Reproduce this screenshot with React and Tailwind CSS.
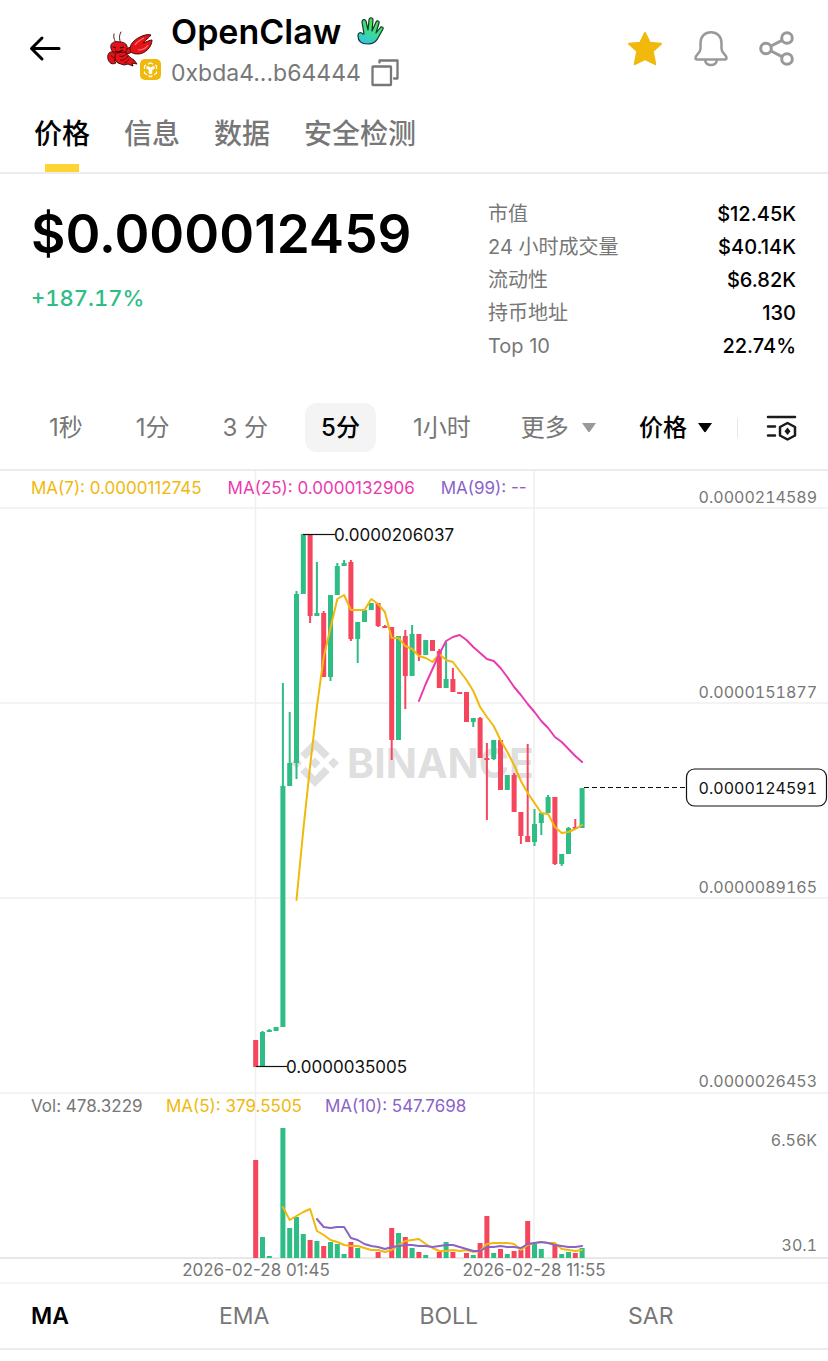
import React, { useState } from 'react';

const GREEN = '#2ebd85';
const RED = '#f6465d';
const YELLOW = '#f0b90b';
const PINK = '#e93bb0';
const PURPLE = '#8a63c9';

const STATS = [
  ['市值', '$12.45K'],
  ['24 小时成交量', '$40.14K'],
  ['流动性', '$6.82K'],
  ['持币地址', '130'],
  ['Top 10', '22.74%'],
];

const INTERVALS = ['1秒', '1分', '3 分', '5分', '1小时'];

// up/down, wick top, body top, body bottom, wick bottom, volume height
const CANDLES = [
  ['d', 1040, 1040, 1067, 1067, 98],
  ['u', 1031, 1032, 1067, 1067, 21],
  ['u', 1029, 1030, 1032, 1032, 2],
  ['u', 1027, 1027, 1031, 1031, 0],
  ['u', 683, 786, 1027, 1027, 130],
  ['u', 712, 763, 786, 786, 30],
  ['u', 591, 594, 763, 779, 41],
  ['u', 534, 534, 594, 594, 24],
  ['d', 534, 534, 616, 623, 18],
  ['u', 562, 613, 616, 616, 17],
  ['d', 611, 613, 677, 677, 12],
  ['u', 595, 595, 677, 681, 16],
  ['u', 563, 566, 595, 595, 14],
  ['u', 560, 563, 566, 566, 4],
  ['d', 560, 562, 639, 641, 16],
  ['u', 622, 622, 639, 663, 10],
  ['u', 610, 610, 622, 622, 0],
  ['u', 603, 603, 610, 610, 0],
  ['d', 603, 603, 626, 627, 6],
  ['d', 625, 626, 628, 628, 0],
  ['d', 627, 627, 740, 760, 30],
  ['u', 636, 636, 740, 740, 25],
  ['d', 630, 636, 676, 709, 21],
  ['u', 625, 634, 676, 676, 10],
  ['d', 634, 634, 655, 661, 6],
  ['u', 640, 640, 655, 655, 3],
  ['d', 640, 640, 651, 651, 0],
  ['d', 649, 651, 688, 688, 6],
  ['u', 642, 679, 688, 688, 16],
  ['d', 668, 679, 692, 692, 6],
  ['d', 692, 692, 694, 694, 0],
  ['d', 692, 692, 722, 722, 5],
  ['u', 718, 718, 722, 727, 3],
  ['d', 717, 718, 758, 758, 15],
  ['d', 743, 758, 760, 820, 42],
  ['u', 740, 740, 759, 760, 5],
  ['d', 740, 740, 790, 790, 9],
  ['u', 775, 775, 790, 790, 4],
  ['d', 773, 775, 812, 812, 7],
  ['d', 812, 812, 836, 844, 8],
  ['d', 744, 836, 842, 842, 37],
  ['u', 809, 824, 842, 846, 14],
  ['u', 813, 813, 823, 835, 9],
  ['u', 795, 797, 813, 813, 0],
  ['d', 797, 797, 864, 865, 14],
  ['u', 854, 854, 864, 866, 4],
  ['u', 827, 828, 854, 854, 6],
  ['d', 819, 827, 829, 829, 5],
  ['u', 788, 788, 828, 828, 10],
];

const MA7 = [
  900, 830, 766, 707, 657, 628, 599, 595, 610, 610, 610, 599, 604, 612, 638, 638, 646, 649, 656, 658, 662, 654,
  660, 662, 671, 680, 691, 707, 717, 726, 740, 752, 765, 781, 793, 803, 813, 814, 827, 833, 832, 829, 825,
];
const MA25 = [
  701, 684, 669, 654, 641, 637, 635, 640, 647, 653, 659, 661, 668, 677, 687, 695, 704, 712, 721, 728, 737, 742, 749,
  756, 762,
];
const VOL_MA5 = [
  1207, 1220, 1216, 1212, 1209, 1231, 1235, 1240, 1242, 1245, 1246, 1246, 1248, 1250, 1250, 1252, 1250, 1245, 1241,
  1240, 1239, 1244, 1248, 1251, 1251, 1250, 1251, 1250, 1252, 1251, 1244, 1243, 1243, 1243, 1244, 1250, 1245, 1243,
  1242, 1243, 1243, 1249, 1250, 1251, 1250,
];
const VOL_MA10 = [
  1219, 1227, 1228, 1227, 1227, 1238, 1240, 1244, 1246, 1247, 1249, 1247, 1246, 1245, 1245, 1246, 1246, 1247, 1246,
  1245, 1245, 1247, 1249, 1251, 1251, 1247, 1247, 1246, 1247, 1247, 1248, 1244, 1243, 1242, 1243, 1245, 1246, 1247,
  1247, 1246,
];

const candleX = (i) => 255.7 + i * 6.8;

const linePoints = (values, start) => values.map((y, i) => `${candleX(i + start)},${y}`).join(' ');

function BackIcon() {
  return (
    <svg className="h-8 w-8" viewBox="0 0 32 32" fill="none" stroke="#000" strokeWidth="3" aria-hidden>
      <path strokeLinecap="round" strokeLinejoin="round" d="M30 15.500H2.500M13 5L2.500 15.500 13 26" />
    </svg>
  );
}

function LobsterLogo() {
  return (
    <svg className="h-[38px] w-12" viewBox="0 0 48 38" aria-hidden>
      <g fill="none" stroke="#45181a" strokeWidth="1" strokeLinecap="round">
        <path d="M11 15C9 11 7 8 8 4M15 14c-2-5-2-9 0-12" />
      </g>
      <g fill="#e31318" stroke="#4c080b" strokeWidth="1" strokeLinejoin="round">
        <path d="M18 19l8-2 3 4-8 3z" />
        <path d="M24 19c0-5 4-9 10-12 4-2 8-3 11-2-2 3-6 5-8 8 3-1 7-3 9-3 0 7-7 14-14 14-4 0-8-1-8-5z" />
        <path d="M5 15c1-3 5-4 9-3 5 0 8 3 7 7-1 4-4 5-8 5-5 0-9-3-8-9z" />
        <path d="M7 22c-4-1-6 3-5 7 1 4 4 6 8 4l-2-3 4 1c1-3-1-8-5-9z" />
        <path d="M10 23l9-1c3 3 5 6 9 8l3 4-5-1 1 3-5-2-4 1-6-2c-3-2-4-6-2-10z" />
      </g>
      <path
        d="M13 26c3 1 6 0 7-2M14 30c3 1 6-1 8-4M18 33c2 0 4-2 5-4M5 25c1 2 2 3 4 3"
        fill="none"
        stroke="#5c0a0d"
        strokeWidth="1"
      />
      <path d="M7 17l3 1M14 18l4-1M9 21c2 1 5 1 8-1" fill="none" stroke="#2e0507" strokeWidth="1.200" />
      <path d="M29 15c2-3 5-5 9-7M32 20c4 0 8-2 10-5" fill="none" stroke="#ff7a73" strokeWidth="1.200" />
    </svg>
  );
}

function ChainBadge() {
  return (
    <svg className="absolute -right-[7px] -bottom-3 h-[21px] w-[21px]" viewBox="0 0 21 21" aria-hidden>
      <rect width="21" height="21" rx="5" fill="#f0b90b" />
      <path
        d="M8 5.200l2.500-1.400L13 5.200M15 6l1.500 1v3M16.500 12.500v1.700L14 15.700M12.500 16.600l-2 1.100-2-1.100M7 15.700l-2.500-1.500v-1.700M4.500 10V7L6 6"
        fill="none"
        stroke="#fff"
        strokeWidth="1.200"
      />
      <path
        d="M7.800 6.900l2.700 1.600 2.700-1.600 1.500.9v1.800L12.300 11v3.300l-1.800 1.100-1.800-1.100V11L6.300 9.600V7.800z"
        fill="#fff"
      />
    </svg>
  );
}

function HandIcon() {
  return (
    <svg className="h-[30px] w-7" viewBox="0 0 28 30" aria-hidden>
      <defs>
        <linearGradient id="hand" x1="0.600" y1="0" x2="0.300" y2="1">
          <stop offset="0" stopColor="#4fe03b" />
          <stop offset="0.500" stopColor="#3ddc8c" />
          <stop offset="1" stopColor="#35c3e8" />
        </linearGradient>
      </defs>
      <path
        d="M1 19c0-4 3-4 5-2l1 0L5 5c0-3 3-3 4-1l2 9 1-10c0-3 4-3 4 0l-1 11 4-9c1-2 4-1 3 1l-3 10 4-5c1-2 4-1 3 1l-5 9c-2 4-5 6-10 6-7 0-10-3-10-8z"
        fill="url(#hand)"
        stroke="#12382c"
        strokeWidth="1.200"
        strokeLinejoin="round"
      />
    </svg>
  );
}

function CopyIcon() {
  return (
    <svg className="h-7 w-7" viewBox="0 0 28 28" fill="none" stroke="#777" strokeWidth="2.300" strokeLinejoin="round" aria-hidden>
      <rect x="1.500" y="7.500" width="18.500" height="18.500" rx="0.500" />
      <path strokeLinecap="round" d="M8.500 3.500v-2h18v18h-3.500" />
    </svg>
  );
}

function StarIcon() {
  return (
    <svg className="h-9 w-9" viewBox="0 0 36 36" fill={YELLOW} stroke={YELLOW} strokeWidth="2" strokeLinejoin="round" aria-hidden>
      <path d="M18 2l4.700 9.800 11.300 1-8.300 7.400 2.600 13L18 28 7.700 33.200l2.600-13L2 12.800l11.300-1z" />
    </svg>
  );
}

function BellIcon() {
  return (
    <svg className="h-9 w-9" viewBox="0 0 36 36" fill="none" stroke="#999" strokeWidth="2.500" strokeLinejoin="round" aria-hidden>
      <path d="M7.500 12C7.500 5.500 12 1.300 18 1.300S28.500 5.500 28.500 12v5.500c0 5 5 6 5 9.500 0 1-.5 1.500-1.500 1.500H4c-1 0-1.500-.5-1.500-1.500 0-3.500 5-4.500 5-9.500z" />
      <path d="M12 29c.5 3 3 5 6 5s5.500-2 6-5" />
    </svg>
  );
}

function ShareIcon() {
  return (
    <svg className="h-9 w-9" viewBox="0 0 36 36" fill="none" stroke="#999" strokeWidth="3" aria-hidden>
      <circle cx="7" cy="17.500" r="5.300" />
      <circle cx="28" cy="7" r="5.300" />
      <circle cx="28" cy="28" r="5.300" />
      <path d="M12 15l11-5.700M12 20l11 5.700" />
    </svg>
  );
}

function SettingsIcon() {
  return (
    <svg className="h-8 w-8" viewBox="0 0 32 32" fill="none" stroke="#1a1a1a" strokeWidth="2.500" strokeLinecap="round" aria-hidden>
      <path d="M2 5h27M2 14.500h7M2 23.500h7" />
      <path strokeLinejoin="round" d="M21.500 11l7.500 4v8.500l-7.500 4-7.500-4V15z" />
      <path d="M21.500 15.500l3 3.700-3 3.800-3-3.800z" fill="#1a1a1a" stroke="none" />
    </svg>
  );
}

function CaretIcon({ className }) {
  return (
    <svg className={`pointer-events-none h-3 w-4 ${className}`} viewBox="0 0 16 12" fill="currentColor" aria-hidden>
      <path d="M1 1h14L8.800 9.800c-.4.600-1.200.6-1.600 0z" />
    </svg>
  );
}

function Header() {
  return (
    <header className="flex items-center pt-2 pr-[33px] pl-[29px]">
      <button type="button" aria-label="返回">
        <BackIcon />
      </button>
      <div className="relative ml-[45px] shrink-0">
        <LobsterLogo />
        <ChainBadge />
      </div>
      <div className="ml-[17px]">
        <div className="flex items-center gap-4">
          <h1 className="text-[34px] leading-[48px] font-semibold">OpenClaw</h1>
          <HandIcon />
        </div>
        <div className="flex items-center gap-[10px]">
          <span className="text-[23px] leading-[34px] text-[#777]">0xbda4...b64444</span>
          <button type="button" aria-label="复制地址">
            <CopyIcon />
          </button>
        </div>
      </div>
      <div className="ml-auto flex items-center gap-[30px]">
        <button type="button" aria-label="收藏">
          <StarIcon />
        </button>
        <button type="button" aria-label="提醒">
          <BellIcon />
        </button>
        <button type="button" aria-label="分享">
          <ShareIcon />
        </button>
      </div>
    </header>
  );
}

function PageTabs() {
  const [active, setActive] = useState('价格');
  return (
    <nav className="flex gap-[34px] border-b-2 border-[#ececec] px-[34px] pt-6">
      {['价格', '信息', '数据', '安全检测'].map((tab) => (
        <button
          key={tab}
          type="button"
          onClick={() => setActive(tab)}
          className={`flex flex-col items-center text-[28px] leading-[40px] font-medium ${active === tab ? 'text-black' : 'text-[#777]'}`}
        >
          {tab}
          <span className={`mt-[10px] h-2 w-[34px] ${active === tab ? 'bg-[#fcd535]' : ''}`} />
        </button>
      ))}
    </nav>
  );
}

function PriceSummary() {
  return (
    <section className="flex items-start justify-between pt-6 pr-8 pl-[31px]">
      <div>
        <p className="text-[53px] leading-[72px] font-semibold">$0.000012459</p>
        <p className="mt-3 text-[22px] leading-8 font-medium text-[#2ebd85] tabular-nums">+187.17%</p>
      </div>
      <dl className="w-[308px] text-[20px] leading-[33px]">
        {STATS.map(([label, value]) => (
          <div key={label} className="flex justify-between">
            <dt className="text-[#777]">{label}</dt>
            <dd className="font-medium">{value}</dd>
          </div>
        ))}
      </dl>
    </section>
  );
}

function Toolbar() {
  const [interval, setInterval] = useState('5分');
  return (
    <div className="mt-10 flex items-center border-b-2 border-[#ececec] pr-[30px] pb-[17px] pl-[33px] text-[24px]">
      <div className="flex gap-[21px]">
        {INTERVALS.map((item) => (
          <button
            key={item}
            type="button"
            onClick={() => setInterval(item)}
            className={`h-[49px] rounded-xl px-4 whitespace-nowrap ${interval === item ? 'bg-[#f4f4f4] font-medium text-black' : 'text-[#777]'}`}
          >
            {item}
          </button>
        ))}
      </div>
      <label className="ml-[34px] flex items-center gap-3 text-[#777]">
        <select aria-label="更多周期" className="appearance-none bg-transparent outline-none">
          <option>更多</option>
        </select>
        <CaretIcon className="text-[#999]" />
      </label>
      <label className="ml-auto flex items-center gap-[10px] font-medium">
        <select aria-label="图表类型" className="appearance-none bg-transparent outline-none">
          <option>价格</option>
        </select>
        <CaretIcon className="text-black" />
      </label>
      <span className="ml-6 h-5 w-px bg-[#e6e6e6]" />
      <button type="button" aria-label="图表设置" className="ml-7">
        <SettingsIcon />
      </button>
    </div>
  );
}

function Watermark() {
  return (
    <g fill="#dfdfdf">
      <path
        transform="translate(291 739) scale(2)"
        d="M16.624 13.920l2.718 2.716-7.354 7.353-7.353-7.353 2.718-2.716 4.635 4.660 4.636-4.660zM21.260 9.284L24 12l-2.715 2.716L18.568 12l2.692-2.716zM11.988 9.285l2.717 2.691-2.717 2.718L9.272 12l2.716-2.715zM2.716 9.284L5.409 12l-2.692 2.692L0 12l2.716-2.716zM11.988.012l7.354 7.329-2.718 2.715-4.636-4.635-4.635 4.659-2.718-2.715 7.353-7.353z"
      />
      <text x="347" y="778" fontSize="41" fontWeight="700">
        BINANCE
      </text>
    </g>
  );
}

function Chart() {
  return (
    <section className="relative" aria-label="K 线图">
      <div className="absolute inset-x-0 top-[6px] flex gap-[26px] px-[31px] text-[17px] leading-[22px]">
        <span className="text-[#f0b90b]">MA(7): 0.0000112745</span>
        <span className="text-[#e93bb0]">MA(25): 0.0000132906</span>
        <span className="text-[#8a63c9]">MA(99): --</span>
      </div>
      <svg className="block h-auto w-full" viewBox="0 471 828 811" fontSize="17" fill="#777">
        <g stroke="#efefef" strokeWidth="1.500">
          {[508, 703, 898, 1093].map((y) => (
            <line key={y} x1="0" x2="828" y1={y} y2={y} />
          ))}
          <line x1="255.500" x2="255.500" y1="471" y2="1258" />
          <line x1="534" x2="534" y1="471" y2="1258" />
        </g>
        <Watermark />
        <line x1="0" x2="828" y1="1258" y2="1258" stroke="#e8e8e8" strokeWidth="2" />

        {CANDLES.map(([dir, high, top, bottom, low, volume], i) => {
          const x = candleX(i);
          return (
            <g key={i} fill={dir === 'u' ? GREEN : RED}>
              <rect x={x - 1} y={high} width="2" height={low - high} />
              <rect x={x - 2.5} y={top} width="5" height={bottom - top} />
              <rect x={x - 2.5} y={1258 - volume} width="5" height={volume} />
            </g>
          );
        })}

        <g fill="none" strokeWidth="2" strokeLinejoin="round" strokeLinecap="round">
          <polyline points={linePoints(MA7, 6)} stroke={YELLOW} />
          <polyline points={linePoints(MA25, 24)} stroke={PINK} />
          <polyline points={linePoints(VOL_MA5, 4)} stroke={YELLOW} />
          <polyline points={linePoints(VOL_MA10, 9)} stroke={PURPLE} />
        </g>

        <g stroke="#111" strokeWidth="1.200">
          <line x1="303" x2="335" y1="534.500" y2="534.500" />
          <line x1="256" x2="287" y1="1066.500" y2="1066.500" />
          <line x1="584" x2="686" y1="787.500" y2="787.500" strokeDasharray="5 3" />
          <rect x="686.500" y="769" width="140" height="37" rx="8" fill="#fff" />
        </g>
        <g fill="#111">
          <text x="334" y="541">0.0000206037</text>
          <text x="286" y="1073">0.0000035005</text>
        </g>

        <g className="tabular-nums" fontSize="16" textAnchor="end">
          <text x="817" y="503">0.0000214589</text>
          <text x="817" y="698">0.0000151877</text>
          <text x="817" y="794" fill="#111">0.0000124591</text>
          <text x="817" y="893">0.0000089165</text>
          <text x="817" y="1087">0.0000026453</text>
          <text x="817" y="1146">6.56K</text>
          <text x="817" y="1251">30.1</text>
        </g>
        <g textAnchor="middle">
          <text x="256" y="1276">2026-02-28 01:45</text>
          <text x="534" y="1276">2026-02-28 11:55</text>
        </g>
        <text x="31" y="1112">Vol: 478.3229</text>
        <text x="166" y="1112" fill={YELLOW}>MA(5): 379.5505</text>
        <text x="325" y="1112" fill={PURPLE}>MA(10): 547.7698</text>
      </svg>
    </section>
  );
}

function IndicatorTabs() {
  const [active, setActive] = useState('MA');
  return (
    <nav className="flex gap-[150px] overflow-hidden border-t-2 border-b-2 border-t-[#f5f5f5] border-b-[#ececec] px-[31px] text-[23px] leading-[64px]">
      {['MA', 'EMA', 'BOLL', 'SAR'].map((name) => (
        <button
          key={name}
          type="button"
          onClick={() => setActive(name)}
          className={active === name ? 'font-semibold text-black' : 'text-[#777]'}
        >
          {name}
        </button>
      ))}
    </nav>
  );
}

export default function App() {
  return (
    <main className="min-h-screen bg-white font-['Inter','Noto_Sans_CJK_SC',sans-serif] text-black">
      <Header />
      <PageTabs />
      <PriceSummary />
      <Toolbar />
      <Chart />
      <IndicatorTabs />
    </main>
  );
}
